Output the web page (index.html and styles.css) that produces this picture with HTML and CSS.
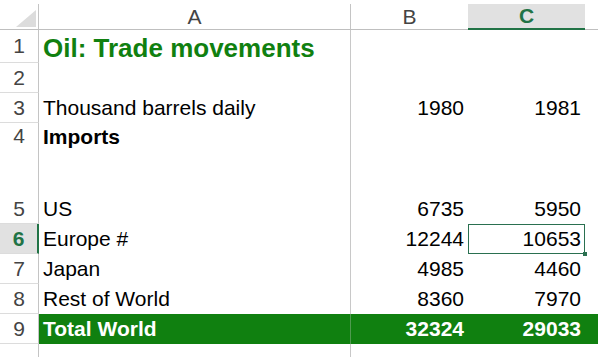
FILE: index.html
```html
<!DOCTYPE html>
<html lang="en">
<head>
    <meta charset="UTF-8">
    <meta name="viewport" content="width=device-width, initial-scale=1.0">
    <title>Oil: Trade movements</title>
    <link rel="stylesheet" href="styles.css">
</head>
<body>
    <div class="sheet">
        <!-- column headers -->
        <div class="corner"><span class="corner-mark"></span></div>
        <div class="ch col-a">A</div>
        <div class="ch">B</div>
        <div class="ch ch-active">C</div>
        <div class="ch ch-rest"></div>

        <!-- row 1 -->
        <div class="rh">1</div>
        <div class="cell col-a title">Oil: Trade movements</div>
        <div class="cell"></div>
        <div class="cell"></div>
        <div class="cell"></div>

        <!-- row 2 -->
        <div class="rh">2</div>
        <div class="cell col-a"></div>
        <div class="cell"></div>
        <div class="cell"></div>
        <div class="cell"></div>

        <!-- row 3 -->
        <div class="rh">3</div>
        <div class="cell col-a">Thousand barrels daily</div>
        <div class="cell num">1980</div>
        <div class="cell num">1981</div>
        <div class="cell"></div>

        <!-- row 4 -->
        <div class="rh rh-tall">4</div>
        <div class="cell col-a top bold">Imports</div>
        <div class="cell"></div>
        <div class="cell"></div>
        <div class="cell"></div>

        <!-- row 5 -->
        <div class="rh">5</div>
        <div class="cell col-a">US</div>
        <div class="cell num">6735</div>
        <div class="cell num">5950</div>
        <div class="cell"></div>

        <!-- row 6 -->
        <div class="rh rh-active">6</div>
        <div class="cell col-a">Europe #</div>
        <div class="cell num">12244</div>
        <div class="cell num selected">10653</div>
        <div class="cell"></div>

        <!-- row 7 -->
        <div class="rh">7</div>
        <div class="cell col-a">Japan</div>
        <div class="cell num">4985</div>
        <div class="cell num">4460</div>
        <div class="cell"></div>

        <!-- row 8 -->
        <div class="rh">8</div>
        <div class="cell col-a">Rest of World</div>
        <div class="cell num">8360</div>
        <div class="cell num">7970</div>
        <div class="cell"></div>

        <!-- row 9 -->
        <div class="rh">9</div>
        <div class="cell col-a total">Total World</div>
        <div class="cell num total">32324</div>
        <div class="cell num total">29033</div>
        <div class="cell total"></div>

        <!-- row 10 (cut off) -->
        <div class="rh rh-last"></div>
        <div class="cell col-a"></div>
        <div class="cell"></div>
        <div class="cell"></div>
        <div class="cell"></div>
    </div>
</body>
</html>
```

FILE: styles.css
```css
body {
    margin: 0;
    background-color: white;
    font-family: "Liberation Sans", Arial, sans-serif;
    overflow: hidden;
}
.sheet {
    display: grid;
    grid-template-columns: 39px 312px 117px 117px 1fr;
    grid-template-rows: 30px 33px 30px 30px 71px 30px 30px 30px 30px 30px 14px;
    width: 598px;
    height: 357px;
}
.corner {
    margin-top: 4px;
    border-right: 1px solid #c4c4c4;
    border-bottom: 1px solid #bfbfbf;
    display: flex;
    justify-content: flex-end;
    align-items: flex-end;
    padding: 0 2px 2px 0;
}
.corner-mark {
    width: 0;
    height: 0;
    border-left: 20px solid transparent;
    border-bottom: 17px solid #dcdcdc;
}
.ch {
    margin-top: 4px;
    border-bottom: 1px solid #bfbfbf;
    display: flex;
    justify-content: center;
    align-items: center;
    font-size: 21px;
    color: #444;
}
.ch.col-a {
    border-right: 1px solid #c4c4c4;
}
.ch-active {
    background-color: #e1e1e1;
    border-bottom: 2px solid #217346;
    color: #217346;
    font-weight: bold;
}
.rh {
    border-right: 1px solid #c4c4c4;
    border-bottom: 1px solid #dcdcdc;
    display: flex;
    justify-content: center;
    align-items: center;
    font-size: 21px;
    line-height: 24px;
    color: #444;
}
.rh-tall {
    align-items: flex-start;
    padding-top: 1px;
    border-bottom: none;
}
.rh-active {
    background-color: #e1e1e1;
    border-right: 2px solid #217346;
    color: #217346;
    font-weight: bold;
}
.rh-last {
    border-bottom: none;
}
.cell {
    display: flex;
    align-items: flex-end;
    padding: 0 4px 3px;
    font-size: 21px;
    line-height: 24px;
    color: black;
    white-space: nowrap;
    position: relative;
}
.col-a {
    border-right: 1px solid #c8c8c8;
}
.num {
    justify-content: flex-end;
}
.top {
    align-items: flex-start;
    padding-top: 2px;
}
.bold {
    font-weight: bold;
}
.title {
    font-size: 26px;
    line-height: 30px;
    font-weight: bold;
    color: #108010;
    padding-bottom: 0;
}
.total {
    background-color: #108010;
    color: white;
    font-weight: bold;
}
.total.col-a {
    border-right-color: #4f9a4f;
}
.selected {
    outline: 1px solid #2a7050;
    outline-offset: -1px;
}
.selected::after {
    content: "";
    position: absolute;
    right: -2px;
    bottom: -2px;
    width: 4px;
    height: 4px;
    background-color: #2a7050;
}
```
